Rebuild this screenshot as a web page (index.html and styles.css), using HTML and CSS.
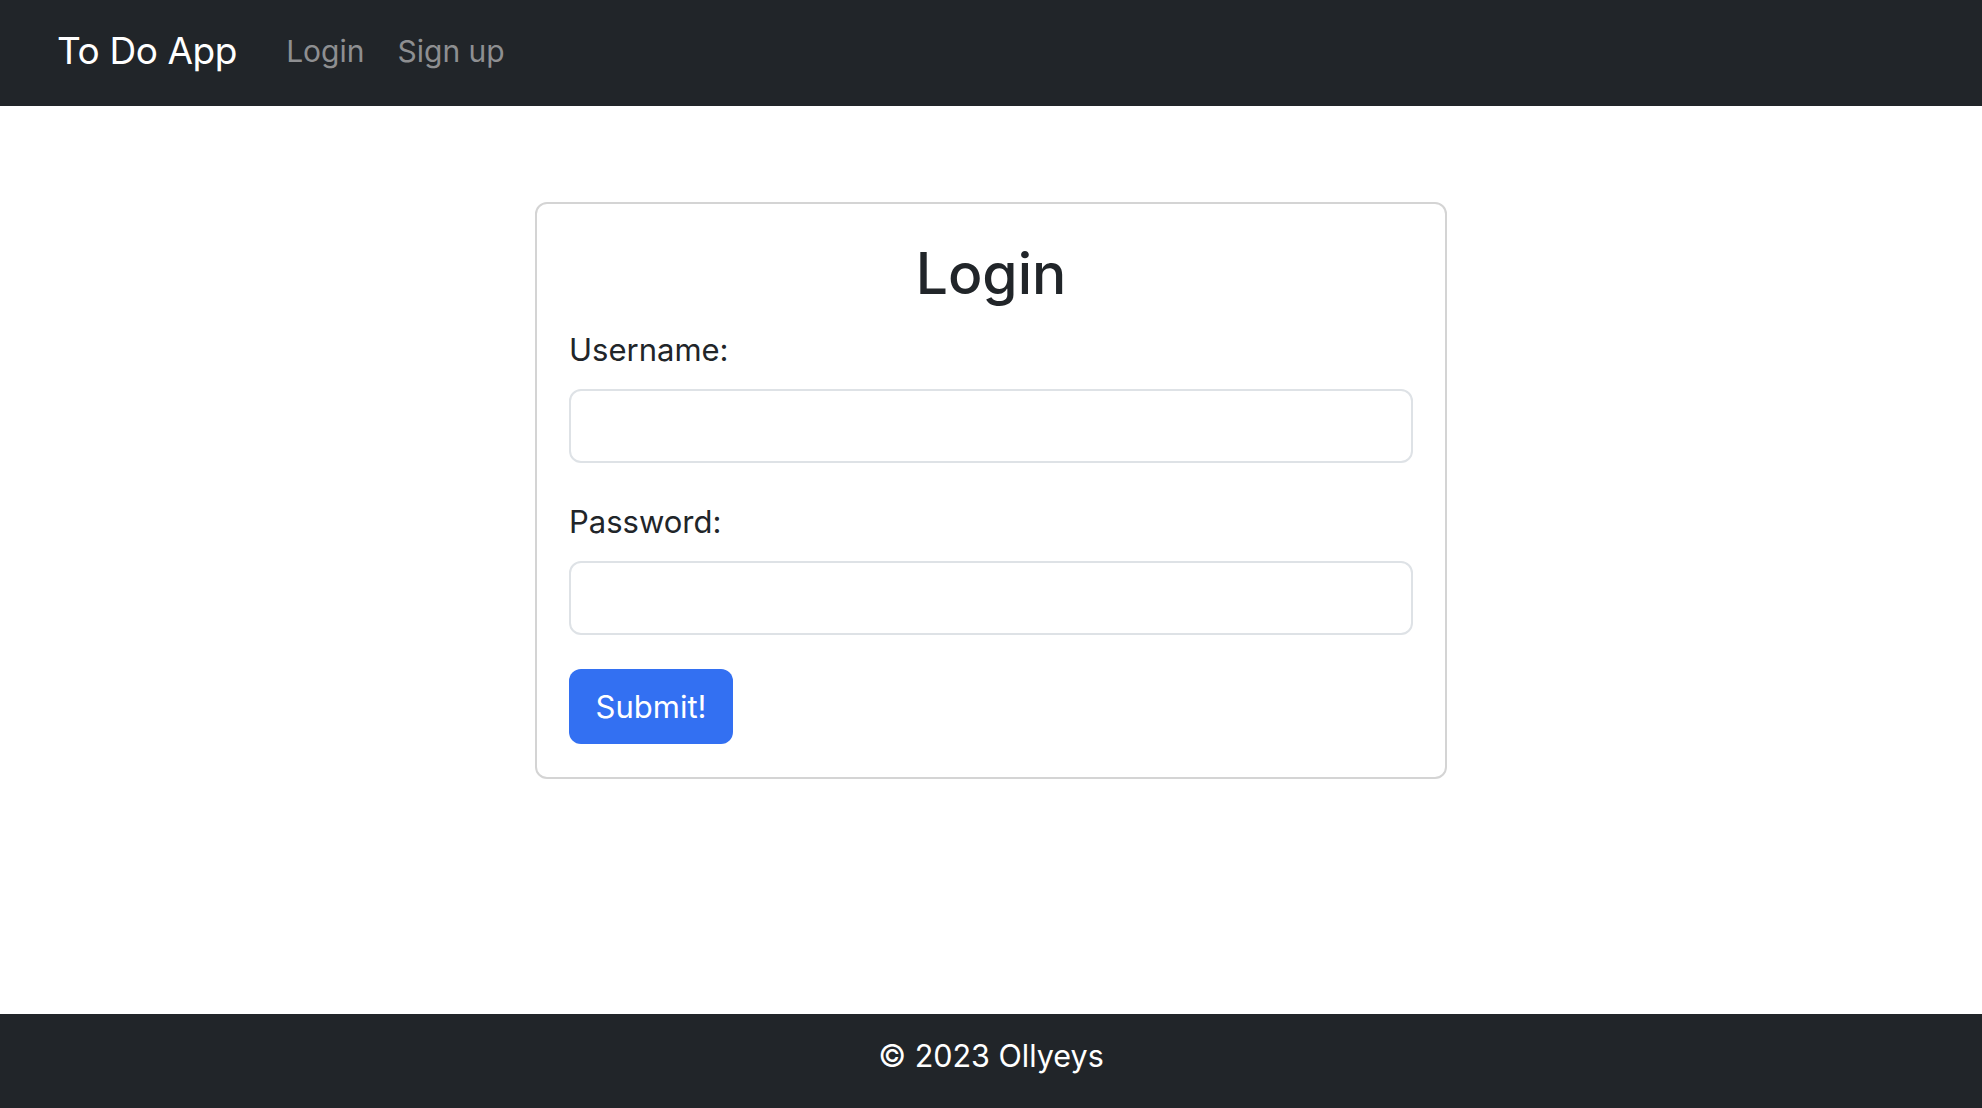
FILE: index.html
```html
<!DOCTYPE html>
<html lang="en">
<head>
<meta charset="utf-8">
<title>To Do App</title>
<link rel="stylesheet" href="styles.css">
</head>
<body>
<nav class="navbar">
  <a class="brand" href="#">To Do App</a>
  <a class="nav-link" href="#">Login</a>
  <a class="nav-link" href="#">Sign up</a>
</nav>
<main class="main">
  <form class="card">
    <h1 class="card-title">Login</h1>
    <label class="label" for="username">Username:</label>
    <input class="input" id="username" type="text">
    <label class="label label-second" for="password">Password:</label>
    <input class="input" id="password" type="password">
    <button class="btn" type="button">Submit!</button>
  </form>
</main>
<footer class="footer">© 2023 Ollyeys</footer>
</body>
</html>
```

FILE: styles.css
```css
* { box-sizing: border-box; }
html, body { margin: 0; padding: 0; }
body {
  font-family: Inter, "Liberation Sans", sans-serif;
  color: #212529;
  background: #fff;
  min-height: 100vh;
  display: flex;
  flex-direction: column;
}
.navbar {
  height: 106px;
  background: #212529;
  display: flex;
  align-items: center;
  padding: 0 0 0 57px;
}
.brand {
  color: #fff;
  text-decoration: none;
  font-size: 37px;
  letter-spacing: -0.4px;
  margin-right: 49px;
  line-height: 1;
  padding-bottom: 5px;
}
.nav-link {
  color: #8e8f91;
  text-decoration: none;
  font-size: 30px;
  margin-right: 33px;
  line-height: 1;
  padding-bottom: 4px;
}
.main {
  flex: 1;
  display: flex;
  justify-content: center;
  align-items: flex-start;
  padding-top: 96px;
}
.card {
  width: 912px;
  border: 2px solid #d4d4d4;
  border-radius: 12px;
  padding: 28px 32px 33px;
  display: flex;
  flex-direction: column;
  align-items: stretch;
}
.card-title {
  margin: 0 0 10px;
  text-align: center;
  font-size: 57px;
  font-weight: 500;
  line-height: 84px;
}
.label {
  font-size: 31px;
  line-height: 48px;
  margin-bottom: 15px;
}
.label-second { margin-top: 35px; }
.input {
  height: 74px;
  border: 2px solid #dee2e6;
  border-radius: 12px;
  font-size: 32px;
  padding: 0 24px;
}
.btn {
  margin-top: 34px;
  align-self: flex-start;
  width: 164px;
  height: 75px;
  border: none;
  border-radius: 12px;
  background: #3370f2;
  color: #fff;
  font-family: inherit;
  font-size: 31px;
  padding: 0;
}
.footer {
  height: 94px;
  background: #212529;
  color: #fff;
  font-size: 30.5px;
  display: flex;
  align-items: center;
  justify-content: center;
  padding-bottom: 12px;
}
```
